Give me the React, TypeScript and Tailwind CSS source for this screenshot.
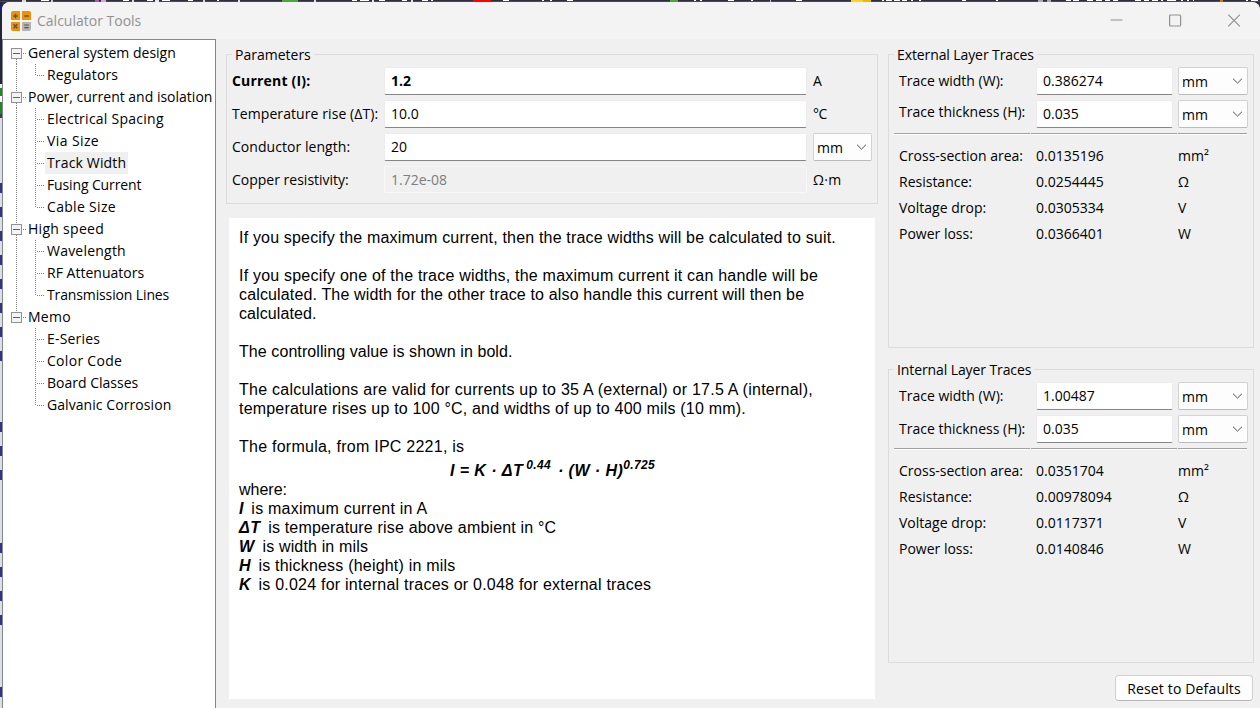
import React from "react";

const UI = "font-['Open_Sans','Noto_Sans',sans-serif]";

type Spec = { text: string; track?: string };

const tree: { group: Spec; items: Spec[] }[] = [
  { group: { text: "General system design" }, items: [{ text: "Regulators", track: "tracking-[0.13px]" }] },
  {
    group: { text: "Power, current and isolation" },
    items: [
      { text: "Electrical Spacing", track: "tracking-[0.25px]" },
      { text: "Via Size", track: "tracking-[0.4px]" },
      { text: "Track Width", track: "tracking-[0.15px]" },
      { text: "Fusing Current", track: "tracking-[-0.13px]" },
      { text: "Cable Size", track: "tracking-[0.32px]" },
    ],
  },
  {
    group: { text: "High speed", track: "tracking-[0.28px]" },
    items: [
      { text: "Wavelength", track: "tracking-[0.22px]" },
      { text: "RF Attenuators", track: "tracking-[0.02px]" },
      { text: "Transmission Lines", track: "tracking-[-0.13px]" },
    ],
  },
  {
    group: { text: "Memo", track: "tracking-[0.25px]" },
    items: [
      { text: "E-Series", track: "tracking-[0.18px]" },
      { text: "Color Code", track: "tracking-[0.3px]" },
      { text: "Board Classes" },
      { text: "Galvanic Corrosion", track: "tracking-[0.07px]" },
    ],
  },
];

const flecks: [number, number, string][] = [
  [22, 4, "#d8d8e0"], [41, 8, "#ffffff"], [51, 2, "#c8c8d0"], [95, 4, "#b455b0"], [101, 5, "#d9a0d8"],
  [123, 6, "#ffffff"], [132, 2, "#d8d8e0"], [147, 6, "#ffffff"], [155, 4, "#e8e8f0"], [162, 8, "#ffffff"],
  [188, 5, "#ffffff"], [203, 2, "#d8d8e0"], [217, 2, "#ffffff"], [238, 2, "#e0e0e8"], [282, 16, "#4aa83c"],
  [314, 2, "#e0e0e8"], [352, 5, "#ffffff"], [360, 9, "#ffffff"], [372, 2, "#e0e0e8"], [379, 6, "#ffffff"],
  [402, 5, "#ffffff"], [411, 2, "#e0e0e8"], [422, 6, "#ffffff"], [431, 2, "#ffffff"], [473, 18, "#ff0000"],
  [503, 6, "#ffffff"], [542, 2, "#ffffff"], [550, 2, "#ffffff"], [567, 6, "#ffffff"], [670, 8, "#4aa83c"],
  [694, 2, "#ffffff"], [700, 2, "#ffffff"], [728, 6, "#ffffff"], [751, 2, "#ffffff"], [770, 1, "#c8c8d0"],
  [796, 6, "#ffffff"], [851, 20, "#fbd51c"], [863, 8, "#f5b400"], [882, 2, "#ffffff"], [886, 6, "#ffffff"],
  [894, 6, "#ffffff"], [902, 5, "#ffffff"], [911, 2, "#ffffff"], [919, 2, "#ffffff"], [962, 4, "#ffffff"],
  [996, 2, "#ffffff"], [1038, 5, "#a8a8b4"], [1047, 4, "#a8a8b4"], [1066, 5, "#ffffff"], [1073, 6, "#ffffff"],
  [1087, 6, "#ffffff"], [1096, 6, "#ffffff"], [1105, 5, "#ffffff"], [1113, 5, "#ffffff"], [1135, 6, "#ffffff"],
  [1144, 5, "#ffffff"], [1152, 6, "#ffffff"], [1161, 2, "#ffffff"], [1167, 9, "#ffffff"], [1181, 2, "#ffffff"],
  [1187, 2, "#ffffff"], [1193, 1, "#ffffff"], [1220, 3, "#c87820"], [1246, 2, "#ffffff"], [1251, 7, "#ffffff"],
];

const marks: [number, number, string][] = [
  [6, 5, "#1c1c8a"], [84, 4, "#eeeeee"], [88, 26, "#1a8c1a"], [96, 6, "#ffffff"], [114, 4, "#3c3c55"],
  [183, 10, "#33337f"], [207, 10, "#33337f"], [231, 10, "#33337f"], [255, 10, "#33337f"], [279, 10, "#33337f"],
  [303, 10, "#33337f"], [327, 10, "#33337f"], [351, 10, "#33337f"], [422, 10, "#33337f"], [446, 10, "#33337f"],
  [470, 10, "#33337f"], [543, 10, "#33337f"], [567, 10, "#33337f"], [591, 10, "#33337f"], [615, 10, "#33337f"],
  [687, 10, "#33337f"],
];

function AppIcon() {
  return (
    <svg width="20" height="20" viewBox="0 0 20 20" className="shrink-0">
      <path d="M2 0h7v9H0V2a2 2 0 0 1 2-2z" fill="#f29100" />
      <path d="M11 0h7a2 2 0 0 1 2 2v7h-9z" fill="#f29100" />
      <path d="M0 11h9v9H2a2 2 0 0 1-2-2z" fill="#f29100" />
      <path d="M11 11h9v7a2 2 0 0 1-2 2h-7z" fill="#b4b4b4" />
      <g stroke="#545454" strokeWidth="1.4">
        <path d="M2.3 5h4.4M4.5 2.8v4.4M13.3 5h4.4" />
        <path d="M2.7 13.2l3.6 4M6.3 13.2l-3.6 4" />
        <path d="M13.3 14h4.4M13.3 16.6h4.4" strokeWidth="1.2" />
      </g>
    </svg>
  );
}

function TitleBar() {
  return (
    <header className="flex h-[37px] shrink-0 items-center bg-[#f3f3f3] pl-[9px] text-[#919191]">
      <AppIcon />
      <span className="ml-1.5 text-[14px] leading-5">Calculator Tools</span>
      <div className="mb-px ml-auto mr-[19px] flex gap-[46px]">
        <svg width="13" height="13" viewBox="0 0 13 13" fill="none" stroke="currentColor">
          <path d="M0.5 6h12" />
        </svg>
        <svg width="13" height="13" viewBox="0 0 13 13" fill="none" stroke="currentColor">
          <rect x="0.6" y="1" width="11" height="11" rx="1" strokeWidth="1.2" />
        </svg>
        <svg width="13" height="13" viewBox="0 0 13 13" fill="none" stroke="currentColor">
          <path d="M0.3 0.7l11.6 11.6M11.9 0.7L0.3 12.3" strokeWidth="1.1" />
        </svg>
      </div>
    </header>
  );
}

function GroupMark({ first, last }: { first: boolean; last: boolean }) {
  return (
    <svg width="20" height="22" viewBox="0 0 20 22" className="shrink-0" shapeRendering="crispEdges">
      {!first && <path d="M8.5 0v6" stroke="#808080" strokeDasharray="1 1" />}
      {!last && <path d="M8.5 17v5" stroke="#808080" strokeDasharray="1 1" />}
      <rect x="3.5" y="6.5" width="10" height="10" rx="1" fill="#f4f4f4" stroke="#919191" />
      <path d="M5 11.5h7" stroke="#4b5fa8" />
      <path d="M15 11.5h4" stroke="#808080" strokeDasharray="1 1" />
    </svg>
  );
}

function ItemMark({ lastItem, lastGroup }: { lastItem: boolean; lastGroup: boolean }) {
  return (
    <svg width="37" height="22" viewBox="0 0 37 22" className="shrink-0" shapeRendering="crispEdges">
      {!lastGroup && <path d="M8.5 0v22" stroke="#808080" strokeDasharray="1 1" />}
      <path d={lastItem ? "M27.5 0v12" : "M27.5 0v22"} stroke="#808080" strokeDasharray="1 1" />
      <path d="M29 11.5h7" stroke="#808080" strokeDasharray="1 1" />
    </svg>
  );
}

function Sidebar() {
  return (
    <nav className="w-[214px] shrink-0 border-x border-t border-[#828790] bg-white pl-[5px] pt-[2px]">
      {tree.map(({ group, items }, g) => (
        <div key={group.text}>
          <div className="flex h-[22px] items-center whitespace-nowrap">
            <GroupMark first={g === 0} last={g === tree.length - 1} />
            <span className={"leading-[22px] " + (group.track ?? "")}>{group.text}</span>
          </div>
          {items.map((item, i) => (
            <div key={item.text} className="flex h-[22px] items-center whitespace-nowrap">
              <ItemMark lastItem={i === items.length - 1} lastGroup={g === tree.length - 1} />
              <span
                className={
                  "h-[22px] px-[2px] leading-[22px] " +
                  (item.track ?? "") +
                  (item.text === "Track Width" ? " bg-[#f0f0f0]" : "")
                }
              >
                {item.text}
              </span>
            </div>
          ))}
        </div>
      ))}
    </nav>
  );
}

function Field({ value, bold, disabled }: { value: string; bold?: boolean; disabled?: boolean }) {
  return (
    <div
      className={
        "rounded-[2px] border px-[6px] leading-[25px] " +
        (disabled
          ? "h-[27px] border-[#f8f8f8] bg-[#f0f0f0] text-[#7d7d7d]"
          : "h-[28px] border-[#ececec] border-b-[#868686] bg-white") +
        (bold ? " font-bold" : "")
      }
    >
      {value}
    </div>
  );
}

function Unit() {
  return (
    <div className="flex h-[28px] items-center justify-between rounded-[2px] border border-[#d2d2d2] border-b-[#bbbbbb] bg-[#fdfdfd] pl-[3px] pr-[4px]">
      <span className="pt-px leading-[25px]">mm</span>
      <svg width="11" height="6" viewBox="0 0 11 6" fill="none" stroke="#505050">
        <path d="M1 0.7L5.5 5.1L10 0.7" />
      </svg>
    </div>
  );
}

function Group({
  title,
  className,
  children,
  track = "",
}: {
  title: string;
  className: string;
  children: React.ReactNode;
  track?: string;
}) {
  return (
    <fieldset className={"min-w-0 border border-[#dcdcdc] " + className}>
      <legend className={"ml-[5px] h-[21px] px-[3px] leading-[21px] " + track}>{title}</legend>
      {children}
    </fieldset>
  );
}

function Parameters() {
  return (
    <Group title="Parameters" className="h-[160px] w-[652px]">
      <div className="grid grid-cols-[152px_423px_59px] gap-y-[5px] pl-[5px] pt-[2px] leading-[27px]">
        <span className="font-bold tracking-[0.18px]">Current (I):</span>
        <Field value="1.2" bold />
        <span className="pl-[6px]">A</span>
        <span className="whitespace-nowrap tracking-[0.08px]">Temperature rise (ΔT):</span>
        <Field value="10.0" />
        <span className="pl-[6px] tracking-[-0.6px]">°C</span>
        <span className="tracking-[0.05px]">Conductor length:</span>
        <Field value="20" />
        <div className="-mr-[6px] ml-[6px]"><Unit /></div>
        <span>Copper resistivity:</span>
        <Field value="1.72e-08" disabled />
        <span className="pl-[6px] tracking-[0.3px]">Ω·m</span>
      </div>
    </Group>
  );
}

function Separator() {
  return (
    <div className="ml-[5px] flex gap-px">
      <div className="h-[2px] w-[136px] border-b border-white bg-[#a0a0a0]" />
      <div className="h-[2px] w-[146px] border-b border-white bg-[#a0a0a0]" />
      <div className="h-[2px] w-[69px] border-b border-white bg-[#a0a0a0]" />
    </div>
  );
}

function Traces({ title, width, results, raised }: { title: string; width: string; results: string[]; raised?: boolean }) {
  const rows = [
    ["Cross-section area:", results[0], "mm²"],
    ["Resistance:", results[1], "Ω"],
    ["Voltage drop:", results[2], "V"],
    ["Power loss:", results[3], "W"],
  ];
  return (
    <Group title={title} className="h-[304px] w-[366px]" track="tracking-[-0.1px]">
      <div className="grid h-[66px] grid-cols-[137px_137px_69px] content-start gap-y-[5px] pl-[10px] pt-[2px] leading-[28px]">
        <span>Trace width (W):</span>
        <Field value={width} />
        <div className="-mr-[6px] ml-[5px]"><Unit /></div>
        <span className={raised ? "-mt-[2px]" : ""}>Trace thickness (H):</span>
        <Field value="0.035" />
        <div className="-mr-[6px] ml-[5px]"><Unit /></div>
      </div>
      <div className="pt-[2px]"><Separator /></div>
      <div className="grid grid-cols-[137px_142px_60px] pl-[10px] pt-[8px] leading-[26px]">
        {rows.map(([label, value, unit]) => (
          <React.Fragment key={label}>
            <span className="whitespace-nowrap">{label}</span>
            <span>{value}</span>
            <span>{unit}</span>
          </React.Fragment>
        ))}
      </div>
    </Group>
  );
}

function Help() {
  return (
    <article className="ml-[3px] mt-[14px] h-[481px] w-[646px] whitespace-nowrap bg-white pl-[10px] pt-[10px] font-['Liberation_Sans',Arial,sans-serif] text-[16px] leading-[19px]">
      <p className="tracking-[0.18px]">If you specify the maximum current, then the trace widths will be calculated to suit.</p>
      <p className="mt-[19px]">
        <span className="tracking-[0.21px]">If you specify one of the trace widths, the maximum current it can handle will be</span>
        <br />
        <span className="tracking-[0.15px]">calculated. The width for the other trace to also handle this current will then be</span>
        <br />
        <span className="tracking-[0.1px]">calculated.</span>
      </p>
      <p className="mt-[19px] tracking-[0.08px]">The controlling value is shown in bold.</p>
      <p className="mt-[19px]">
        <span className="tracking-[0.25px]">The calculations are valid for currents up to 35 A (external) or 17.5 A (internal),</span>
        <br />
        <span className="tracking-[0.19px]">temperature rises up to 100 °C, and widths of up to 400 mils (10 mm).</span>
      </p>
      <p className="mt-[19px] tracking-[0.25px]">The formula, from IPC 2221, is</p>
      <p className="flex h-[24px] items-center pl-[211px] pt-[5px] font-bold italic leading-[19px]">
        <span className="tracking-[0.42px]">I = K · ΔT</span>
        <span className="-mt-[12px] ml-[3px] text-[12px] leading-[12px] tracking-[0.35px]">0.44</span>
        <span className="ml-[7px] tracking-[0.45px]">· (W · H)</span>
        <span className="-mt-[12px] text-[12px] leading-[12px] tracking-[0.35px]">0.725</span>
      </p>
      <p>where:</p>
      <p className="tracking-[0.23px]"><b className="mr-[3px] italic">I</b> is maximum current in A</p>
      <p className="tracking-[0.18px]"><b className="mr-[3px] italic tracking-[0.5px]">ΔT</b> is temperature rise above ambient in °C</p>
      <p className="tracking-[0.15px]"><b className="mr-[3px] italic tracking-[0.8px]">W</b> is width in mils</p>
      <p className="tracking-[0.2px]"><b className="mr-[3px] italic">H</b> is thickness (height) in mils</p>
      <p className="tracking-[0.23px]"><b className="mr-[3px] italic">K</b> is 0.024 for internal traces or 0.048 for external traces</p>
    </article>
  );
}

export default function App() {
  return (
    <div className={"flex h-[708px] w-[1260px] flex-col overflow-hidden bg-[#2f2f40] text-[14px] text-black " + UI}>
      <svg width="1260" height="2" viewBox="0 0 1260 2" className="block shrink-0" shapeRendering="crispEdges">
        <rect y="1" width="1260" height="1" fill="#484858" />
        {flecks.map(([x, w, c]) => (
          <rect key={x} x={x} y="0" width={w} height={c === "#ffffff" ? 1 : 2} fill={c} />
        ))}
      </svg>
      <div className="flex h-[706px]">
        <svg width="2" height="706" viewBox="0 2 2 706" className="block shrink-0" shapeRendering="crispEdges">
          <rect y="2" width="2" height="116" fill="#23263a" />
          <rect y="118" width="2" height="590" fill="#dedee6" />
          {marks.map(([y, h, c]) => (
            <rect key={y} x="0" y={y} width="2" height={h} fill={c} />
          ))}
        </svg>
        <main className="flex w-[1258px] flex-col overflow-hidden rounded-t-[8px] bg-[#f0f0f0]">
          <TitleBar />
          <div className="flex h-[669px]">
            <Sidebar />
            <div className="ml-[10px] pt-[5px]">
              <Parameters />
              <Help />
            </div>
            <div className="ml-[10px] flex flex-col gap-[11px] pt-[5px]">
              <Traces
                title="External Layer Traces"
                width="0.386274"
                results={["0.0135196", "0.0254445", "0.0305334", "0.0366401"]}
                raised
              />
              <Traces
                title="Internal Layer Traces"
                width="1.00487"
                results={["0.0351704", "0.00978094", "0.0117371", "0.0140846"]}
              />
              <button className="mr-px mt-px h-[26px] w-[138px] self-end rounded-[4px] border border-[#d0d0d0] border-b-[#b8b8b8] bg-[#fdfdfd] pt-px leading-[23px] tracking-[0.16px]">
                Reset to Defaults
              </button>
            </div>
          </div>
        </main>
      </div>
    </div>
  );
}
